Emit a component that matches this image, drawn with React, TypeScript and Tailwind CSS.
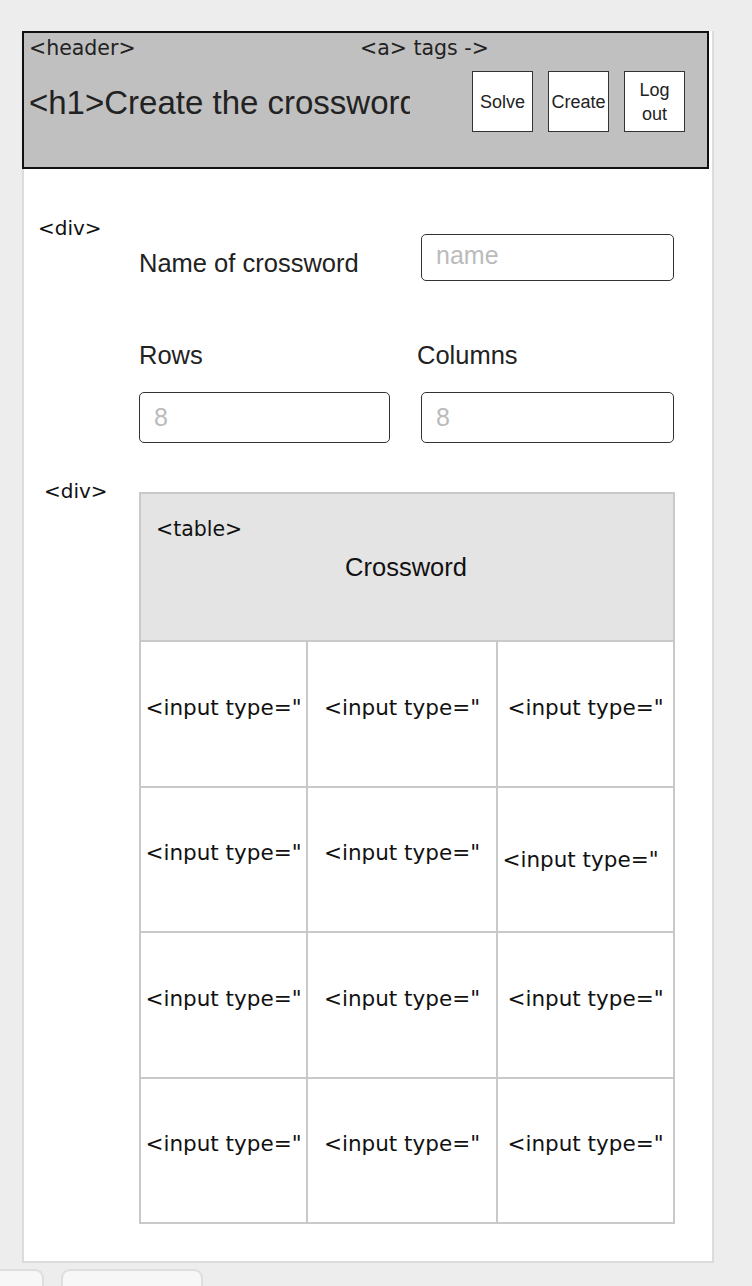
import React from "react";

const font = { fontFamily: '"Liberation Sans", Arial, sans-serif' };
// annotation labels are drawn wider in the mockup
const tag = { fontFamily: '"DejaVu Sans", Verdana, sans-serif' };

const widths = ["w-[167px]", "w-[190px]", "w-[177px]"];

function Cell({ odd }: { odd?: boolean }) {
  return (
    <td className="border-2 border-[#c9c9c9] p-0 h-[145.5px] align-middle bg-white">
      <div className={odd ? "flex justify-center pt-[1px] pr-[10px]" : "flex justify-center pb-[12px]"}>
        <div className="h-[22px] overflow-hidden whitespace-nowrap text-[21.5px] leading-none text-[#111]" style={tag}>
          &lt;input type="
        </div>
      </div>
    </td>
  );
}

function NavButton({ children }: { children: React.ReactNode }) {
  return (
    <div className="w-[61px] h-[61px] bg-white border-[1.5px] border-[#333] flex items-center justify-center text-center text-[18px] leading-[24px] text-[#222] whitespace-nowrap">
      {children}
    </div>
  );
}

export default function App() {
  return (
    <div className="h-[1286px] overflow-hidden bg-[#ededed]" style={font}>
      <div className="ml-[22px] mt-[31px] w-[692px] h-[1232px] bg-white border-2 border-t-0 border-[#dcdcdc]">
        {/* header */}
        <header className="w-[687px] h-[138px] -ml-[2px] bg-[#c0c0c0] border-2 border-[#111] px-[5px] pt-[3px] text-[#222]">
          <div className="flex text-[20.5px] leading-[24px]" style={tag}>
            <span className="w-[331px]">&lt;header&gt;</span>
            <span>&lt;a&gt; tags -&gt;</span>
          </div>
          <div className="flex items-start mt-[11px]">
            <h1 className="w-[381px] overflow-hidden whitespace-nowrap pt-[12px] text-[33px] leading-[40px] font-normal">
              &lt;h1&gt;Create the crossword
            </h1>
            <div className="ml-[62px] flex gap-[15px]">
              <NavButton>Solve</NavButton>
              <NavButton>Create</NavButton>
              <NavButton>
                Log
                <br />
                out
              </NavButton>
            </div>
          </div>
        </header>

        {/* form */}
        <div className="flex">
          <div className="w-[115px] pl-[14px] pt-[47px] text-[20px] leading-[24px] text-[#111]" style={tag}>
            &lt;div&gt;
          </div>
          <div className="flex flex-col pt-[65px] text-[#222]">
            <div className="flex items-start">
              <label className="w-[282px] pt-[14px] text-[25.5px] leading-[30px]">Name of crossword</label>
              <input
                placeholder="name"
                className="w-[253px] h-[47px] rounded-[5px] border-[1.5px] border-[#333] px-[14px] pb-[4px] text-[25px] placeholder:text-[#bbb] outline-none"
              />
            </div>
            <div className="flex mt-[59px] text-[25.5px] leading-[30px]">
              <span className="w-[278px]">Rows</span>
              <span>Columns</span>
            </div>
            <div className="flex gap-[31px] mt-[22px]">
              <input
                placeholder="8"
                className="w-[251px] h-[51px] rounded-[5px] border-[1.5px] border-[#333] px-[14px] text-[25px] placeholder:text-[#bbb] outline-none"
              />
              <input
                placeholder="8"
                className="w-[253px] h-[51px] rounded-[5px] border-[1.5px] border-[#333] px-[14px] text-[25px] placeholder:text-[#bbb] outline-none"
              />
            </div>
          </div>
        </div>

        {/* crossword table */}
        <div className="flex mt-[49px]">
          <div className="w-[115px] pl-[20px] -mt-[13px] text-[20px] leading-[24px] text-[#111]" style={tag}>
            &lt;div&gt;
          </div>
          <table className="border-collapse w-[534px] table-fixed">
            <colgroup>
              {widths.map((w) => (
                <col key={w} className={w} />
              ))}
            </colgroup>
            <thead>
              <tr>
                <th colSpan={3} className="h-[148px] bg-[#e4e4e4] border-2 border-[#c9c9c9] p-0 align-top font-normal text-[#111]">
                  <div className="text-left pl-[15px] pt-[23px] text-[20.5px] leading-[24px]" style={tag}>
                    &lt;table&gt;
                  </div>
                  <div className="text-center pt-[12px] pr-[2px] text-[25.5px] leading-[28px]">Crossword</div>
                </th>
              </tr>
            </thead>
            <tbody>
              {[0, 1, 2, 3].map((r) => (
                <tr key={r}>
                  {[0, 1, 2].map((c) => (
                    <Cell key={c} odd={r === 1 && c === 2} />
                  ))}
                </tr>
              ))}
            </tbody>
          </table>
        </div>
      </div>

      {/* bottom tabs */}
      <div className="flex gap-[17px] mt-[6px]">
        <div className="w-[44px] h-[20px] bg-[#f7f7f7] border-2 border-l-0 border-b-0 border-[#dedede] rounded-tr-[9px]" />
        <div className="w-[142px] h-[20px] bg-[#f7f7f7] border-2 border-b-0 border-[#dedede] rounded-t-[9px]" />
      </div>
    </div>
  );
}
